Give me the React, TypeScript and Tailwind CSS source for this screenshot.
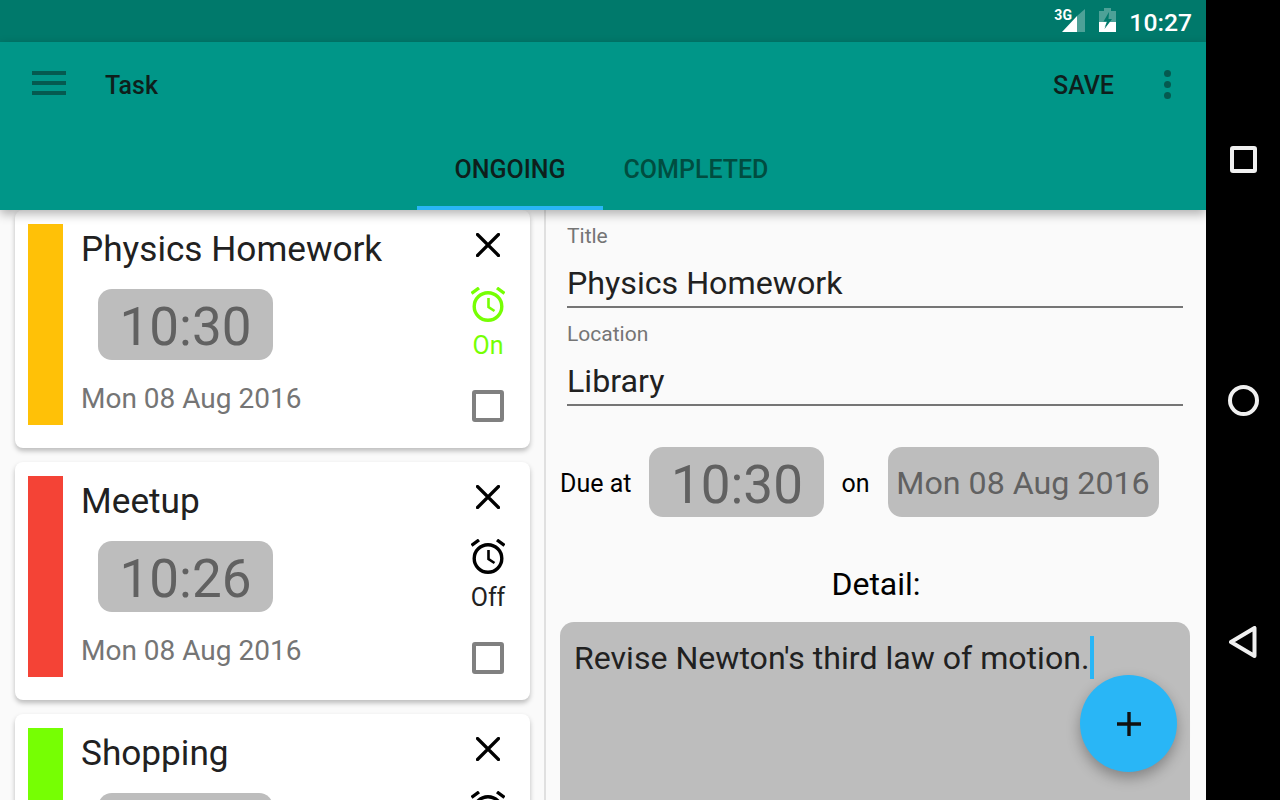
import { ReactNode } from "react";

interface TaskCardProps {
  color: string;
  title: string;
  time: string;
  alarmOn: boolean;
}

function AlarmIcon({ color }: { color: string }) {
  return (
    <svg width="34" height="35" viewBox="0 0 34 35" fill="none" stroke={color}>
      <circle cx="17" cy="19.5" r="13.8" strokeWidth="3.4" />
      <path d="M17.5 11V20L23.5 24" strokeWidth="2.6" />
      <path d="M0.5 6.5L8 1M33.5 6.5L26 1" strokeWidth="3.4" />
    </svg>
  );
}

function CloseIcon() {
  return (
    <svg width="24" height="24" viewBox="0 0 24 24" stroke="#000" strokeWidth="3.2" strokeLinecap="round">
      <path d="M1.5 1.5L22.5 22.5M22.5 1.5L1.5 22.5" />
    </svg>
  );
}

function TimeChip({ time, className }: { time: string; className: string }) {
  return (
    <div className={`flex w-[175px] items-center justify-center rounded-[14px] bg-[#bdbdbd] pt-[7px] text-[53px] text-[#616161] ${className}`}>
      {time}
    </div>
  );
}

function TaskCard({ color, title, time, alarmOn }: TaskCardProps) {
  return (
    <div className="flex h-[238px] w-[515px] shrink-0 rounded-[8px] bg-white pl-[13px] pr-[23px] pt-[14px] shadow-[0_3px_5px_rgba(0,0,0,0.25)]">
      <div className="h-[201px] w-[35px] shrink-0" style={{ backgroundColor: color }} />
      <div className="ml-[18px] flex-1">
        <div className="h-[51px] text-[35.2px] leading-[50px] text-[#212121]">{title}</div>
        <TimeChip time={time} className="ml-[17px] mt-[14px] h-[71px]" />
        <div className="mt-[20px] text-[28px] leading-[38px] text-[#757575]">Mon 08 Aug 2016</div>
      </div>
      <div className="flex w-[38px] shrink-0 flex-col items-center">
        <div className="mt-[9px] h-[24px]">
          <CloseIcon />
        </div>
        <div className="mt-[30px] h-[35px]">
          <AlarmIcon color={alarmOn ? "#76ff03" : "#000"} />
        </div>
        <div className={`mt-[6px] h-[35px] text-[25px] leading-[36px] ${alarmOn ? "text-[#76ff03]" : "text-[#212121]"}`}>
          {alarmOn ? "On" : "Off"}
        </div>
        <div className="mt-[27px] h-[32px] w-[32px] shrink-0 rounded-[3px] border-4 border-[#808080]" />
      </div>
    </div>
  );
}

function Field({ label, value }: { label: string; value: string }) {
  return (
    <div className="h-[98px]">
      <div className="pt-[12px] text-[21px] leading-[28px] text-[#757575]">{label}</div>
      <div className="mt-[12px] h-[46px] border-b-2 border-[#757575] text-[32.2px] leading-[42px] text-[#212121]">{value}</div>
    </div>
  );
}

function NavButton({ children }: { children: ReactNode }) {
  return <div className="flex h-[38px] w-[38px] items-center justify-center">{children}</div>;
}

export default function App() {
  return (
    <div className="flex h-[800px] w-[1280px] overflow-hidden bg-black font-['Roboto',sans-serif]">
      <div className="relative flex w-[1206px] flex-col bg-[#fafafa]">
        {/* status bar */}
        <div className="flex h-[42px] items-center justify-end bg-[#00796b] pr-[14px]">
          <div className="relative h-[32px] w-[32px]">
            <span className="absolute left-[1px] top-[2px] text-[14px] font-bold leading-[16px] text-white">3G</span>
            <svg className="absolute left-0 top-0" width="32" height="32" viewBox="0 0 32 32">
              <path d="M24 11L32 4V27H24Z" fill="#fff" fillOpacity="0.3" />
              <path d="M24 11V27H9Z" fill="#fff" />
            </svg>
          </div>
          <svg className="ml-[14px] mt-[-2px]" width="17" height="24" viewBox="0 0 17 24">
            <path d="M0 3H5V0H12V3H17V24H0Z" fill="#fff" fillOpacity="0.3" />
            <path d="M0 14H8L5.5 19L10 14H17V24H0Z" fill="#fff" />
            <path d="M10 4L4.5 13.5H8L5.5 21L13 11H9.5Z" fill="#00796b" />
          </svg>
          <span className="ml-[13px] mt-[4px] text-[24.7px] font-medium leading-[32px] text-white">10:27</span>
        </div>

        {/* app bar and tabs */}
        <div className="z-10 h-[168px] bg-[#009688] shadow-[0_4px_10px_rgba(0,0,0,0.3)]">
          <div className="flex h-[84px] items-center pl-[32px] pr-[35px]">
            <div className="mb-[2px] flex h-[24px] w-[34px] flex-col justify-between">
              <div className="h-[4px] bg-[#055a50]" />
              <div className="h-[4px] bg-[#055a50]" />
              <div className="h-[4px] bg-[#055a50]" />
            </div>
            <div className="ml-[39px] mt-[4px] flex-1 text-[25px] font-medium leading-[32px] text-[#0e1f1c]">Task</div>
            <div className="mt-[4px] text-[25px] font-medium leading-[32px] text-[#0e1f1c]">SAVE</div>
            <div className="ml-[50px] flex flex-col gap-[4px]">
              <div className="h-[7px] w-[7px] rounded-full bg-[#055a50]" />
              <div className="h-[7px] w-[7px] rounded-full bg-[#055a50]" />
              <div className="h-[7px] w-[7px] rounded-full bg-[#055a50]" />
            </div>
          </div>
          <div className="flex h-[84px] justify-center">
            <div className="flex w-[186px] items-center justify-center border-b-[4px] border-[#29b6f6] pt-[8px] text-[25px] font-medium text-[#0e1f1c]">
              ONGOING
            </div>
            <div className="flex w-[186px] items-center justify-center pt-[4px] text-[25px] font-medium text-[#004d40]">
              COMPLETED
            </div>
          </div>
        </div>

        {/* content */}
        <div className="flex h-[590px] overflow-hidden">
          <div className="flex w-[544px] shrink-0 flex-col gap-[14px] pl-[15px]">
            <TaskCard color="#ffc107" title="Physics Homework" time="10:30" alarmOn />
            <TaskCard color="#f44336" title="Meetup" time="10:26" alarmOn={false} />
            <TaskCard color="#76ff03" title="Shopping" time="10:26" alarmOn={false} />
          </div>
          <div className="w-[2px] shrink-0 bg-[#e0e0e0]" />
          <div className="flex-1 overflow-hidden">
            <div className="ml-[21px] mr-[23px]">
              <Field label="Title" value="Physics Homework" />
              <Field label="Location" value="Library" />
            </div>
            <div className="ml-[14px] mt-[41px] flex h-[70px] items-center text-[25px] text-black">
              <span className="pt-[4px]">Due at</span>
              <TimeChip time="10:30" className="ml-[18px] h-[70px]" />
              <span className="ml-[17px] pt-[4px]">on</span>
              <div className="ml-[18px] flex h-[70px] w-[271px] items-center justify-center rounded-[14px] bg-[#bdbdbd] pt-[3px] text-[32.2px] text-[#616161]">
                Mon 08 Aug 2016
              </div>
            </div>
            <div className="mt-[45px] text-center text-[32px] leading-[44px] text-black">Detail:</div>
            <div className="ml-[14px] mr-[16px] mt-[16px] h-[260px] rounded-[14px] bg-[#bdbdbd] px-[14px] pt-[14px] text-[32.1px] leading-[44px] text-[#212121]">
              <span>Revise Newton's third law of motion.</span>
              <span className="ml-[1px] inline-block h-[43px] w-[4px] bg-[#29b6f6] align-top" />
            </div>
          </div>
        </div>

        {/* floating action button */}
        <div className="absolute left-[1080px] top-[675px] flex h-[97px] w-[97px] items-center justify-center rounded-full bg-[#29b6f6] shadow-[0_6px_14px_rgba(0,0,0,0.3)]">
          <svg width="26" height="26" viewBox="0 0 26 26" stroke="#111" strokeWidth="3.4">
            <path d="M13 1V25M1 13H25" />
          </svg>
        </div>
      </div>

      {/* nav bar */}
      <div className="flex w-[74px] flex-col items-center justify-between pb-[139px] pt-[140px]">
        <NavButton>
          <div className="h-[27px] w-[27px] rounded-[3px] border-4 border-[#f0f0f0]" />
        </NavButton>
        <NavButton>
          <div className="h-[31px] w-[31px] rounded-full border-4 border-[#f0f0f0]" />
        </NavButton>
        <NavButton>
          <svg width="28" height="32" viewBox="0 0 28 32" fill="none" stroke="#f0f0f0" strokeWidth="4" strokeLinejoin="round">
            <path d="M25.5 2V30L2 16Z" />
          </svg>
        </NavButton>
      </div>
    </div>
  );
}
